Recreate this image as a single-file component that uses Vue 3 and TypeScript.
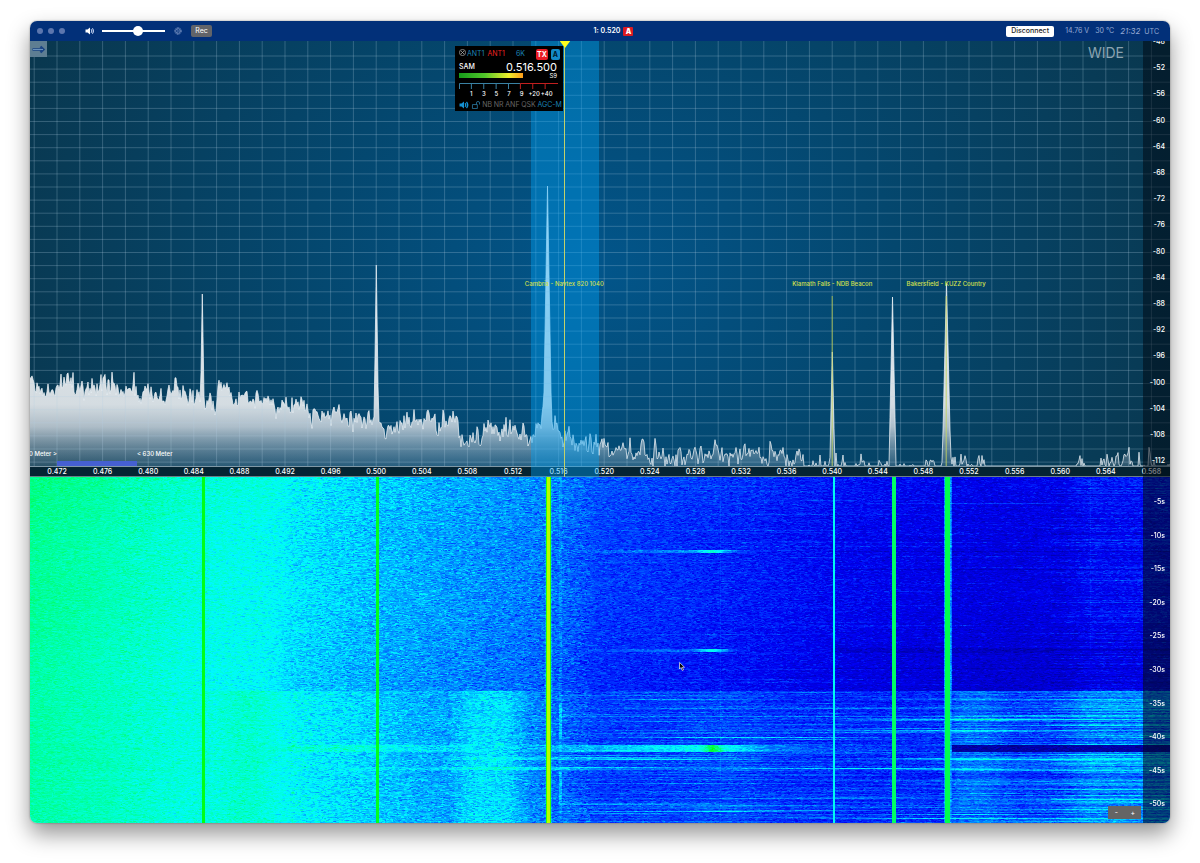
<script setup lang="ts">
import { onMounted, ref } from 'vue'

type Point = [number, number]

const START = 0.46963
const SPAN = 0.1
const W = 1140
const SPEC_H = 436
const FLOOR = 425
const FALL_H = 346

const volume = ref(58)
const waterfall = ref<HTMLCanvasElement | null>(null)

const freqPct = (f: number): number => ((f - START) / SPAN) * 100

const freqLabels = Array.from({ length: 25 }, (_, i) => {
  const f = 0.472 + i * 0.004
  return { text: f.toFixed(3), left: freqPct(f) + '%' }
})
const dbLabels = Array.from({ length: 17 }, (_, i) => ({
  text: String(-48 - i * 4),
  top: ((1 + i * 26.2) / SPEC_H) * 100 + '%',
}))
const timeLabels = Array.from({ length: 10 }, (_, i) => ({
  text: `-${(i + 1) * 5}s`,
  top: ((25 + i * 33.6) / FALL_H) * 100 + '%',
}))
const gridX = Array.from({ length: 50 }, (_, i) => 4.2 + i * 22.8)
const gridY = Array.from({ length: 32 }, (_, i) => 15 + i * 13.1)

const spots = [
  { text: 'Cambria - Navtex 820 1040', f: 0.5165, line: false },
  { text: 'Klamath Falls - NDB Beacon', f: 0.54, line: true },
  { text: 'Bakersfield - KUZZ Country', f: 0.55, line: true },
].map((s) => ({ ...s, x: (freqPct(s.f) / 100) * W, left: freqPct(s.f) + '%' }))

const meterTicks = ['1', '3', '5', '7', '9', '+20', '+40']

function prng(seed: number): () => number {
  let s = seed
  return () => {
    s = (s + 0x6d2b79f5) | 0
    let t = Math.imul(s ^ (s >>> 15), 1 | s)
    t = (t + Math.imul(t ^ (t >>> 7), 61 | t)) ^ t
    return ((t ^ (t >>> 14)) >>> 0) / 4294967296
  }
}

function interp(points: Point[], x: number): number {
  if (x <= points[0][0]) return points[0][1]
  for (let i = 1; i < points.length; i++) {
    const [x1, y1] = points[i]
    if (x <= x1) {
      const [x0, y0] = points[i - 1]
      return y0 + ((y1 - y0) * (x - x0)) / (x1 - x0)
    }
  }
  return points[points.length - 1][1]
}

/* Mean noise level across the panadapter */
const noiseFloor: Point[] = [
  [0, 343], [10, 347], [28, 345], [45, 342], [50, 352], [70, 340], [78, 347], [104, 349], [109, 362], [115, 350],
  [130, 354], [150, 351], [165, 359], [172, 356], [185, 362], [190, 348], [197, 346], [204, 365], [212, 355],
  [228, 355], [240, 363], [260, 366], [272, 362], [280, 373], [296, 374], [320, 377], [346, 377], [356, 385],
  [366, 392], [376, 386], [386, 377], [402, 375], [406, 387], [425, 382], [432, 397], [442, 397], [455, 391],
  [472, 390], [490, 397], [505, 389], [514, 380], [522, 378], [530, 392], [540, 402], [560, 403], [580, 404],
  [600, 407], [612, 405], [622, 415], [650, 416], [668, 412], [680, 412], [700, 412], [730, 413], [745, 417],
  [770, 421], [790, 424], [830, 423], [850, 430], [890, 432], [898, 425], [950, 423], [960, 439], [1035, 440],
  [1050, 430], [1075, 422], [1090, 418], [1105, 424], [1140, 425],
]
const peaks = [
  { x: 172.3, y: 253, half: 2.6 },
  { x: 346.3, y: 224, half: 2.6 },
  { x: 517.5, y: 145, half: 4.5 },
  { x: 802.3, y: 311, half: 2.2 },
  { x: 862.5, y: 256, half: 3.2 },
  { x: 916.5, y: 242, half: 4 },
]

function buildTrace(): string {
  const rnd = prng(4711)
  const pts: Point[] = []
  let prev = 0
  for (let x = 0; x <= W; x += 1) {
    const raw = rnd() - 0.5 + (rnd() - 0.5)
    prev = prev * 0.4 + raw * 13
    const spike = rnd() < 0.08 ? rnd() * 12 : 0
    pts.push([x, Math.min(FLOOR, interp(noiseFloor, x) + prev - spike)])
  }
  for (const p of peaks) {
    for (const pt of pts) {
      const t = Math.abs(pt[0] - p.x) / p.half
      if (t < 1) pt[1] = Math.min(pt[1], p.y + (FLOOR - 15 - p.y) * t)
    }
    pts.push([p.x, p.y])
  }
  pts.sort((a, b) => a[0] - b[0])
  return pts.map(([x, y]) => `${x},${y.toFixed(1)}`).join(' L')
}
const trace = buildTrace()
const tracePath = `M${trace}`
const areaPath = `M0,${FLOOR} L${trace} L${W},${FLOOR} Z`

const palette: [number, number, number, number][] = [
  [0, 0, 0, 90],
  [0.24, 0, 0, 240],
  [0.3, 0, 50, 255],
  [0.5, 0, 250, 255],
  [0.57, 0, 255, 200],
  [0.75, 0, 255, 0],
  [1, 255, 255, 0],
]
function colour(v: number): [number, number, number] {
  const c = Math.max(0, Math.min(1, v))
  for (let i = 1; i < palette.length; i++) {
    if (c <= palette[i][0]) {
      const a = palette[i - 1]
      const b = palette[i]
      const t = (c - a[0]) / (b[0] - a[0])
      return [a[1] + (b[1] - a[1]) * t, a[2] + (b[2] - a[2]) * t, a[3] + (b[3] - a[3]) * t]
    }
  }
  return [255, 255, 0]
}

const earlyLevel: Point[] = [
  [0, 0.615], [70, 0.59], [130, 0.56], [172, 0.535], [230, 0.52], [270, 0.485], [346, 0.44], [420, 0.41],
  [490, 0.38], [530, 0.36], [570, 0.31], [650, 0.29], [730, 0.27], [820, 0.24], [920, 0.22],
  [970, 0.21], [1030, 0.215], [1060, 0.25], [1140, 0.25],
]
const lateLevel: Point[] = [
  [0, 0.6], [70, 0.58], [150, 0.54], [185, 0.54], [205, 0.56], [225, 0.558], [250, 0.52], [290, 0.49],
  [346, 0.46], [400, 0.42], [418, 0.42], [445, 0.475], [475, 0.475], [500, 0.39], [530, 0.355], [570, 0.305],
  [640, 0.3], [700, 0.31], [760, 0.285], [860, 0.275], [914, 0.28], [930, 0.345], [955, 0.34], [985, 0.3],
  [1025, 0.31], [1060, 0.38], [1140, 0.38],
]
const streaks = [
  { y: 74, from: 530, peak: 682, to: 725, amp: 0.12, r: 1 },
  { y: 173, from: 530, peak: 682, to: 720, amp: 0.1, r: 1 },
  { y: 260, from: 560, peak: 800, to: 910, amp: 0.09, r: 0 },
  { y: 281, from: 380, peak: 590, to: 760, amp: 0.12, r: 1 },
  { y: 291, from: 300, peak: 500, to: 790, amp: 0.09, r: 1 },
]
const bandBoost: Point[] = [
  [230, 0], [280, 0.06], [320, 0.07], [346, 0.06], [420, 0.05], [450, 0], [490, 0.01], [520, 0.06], [580, 0.14],
  [660, 0.2], [700, 0.19], [740, 0.08], [800, 0.03], [900, 0],
]
const carriers = [
  { x: 172.8, half: 1.5, v: 0.73, halo: 0 },
  { x: 347, half: 1.4, v: 0.72, halo: 0 },
  { x: 518, half: 2.2, v: 0.93, halo: 5 },
  { x: 803.5, half: 1, v: 0.52, halo: 0 },
  { x: 863.5, half: 1.6, v: 0.66, halo: 0 },
  { x: 917.2, half: 2.3, v: 0.68, halo: 4 },
]

/* Short bursts that smear along single rows of the lower part */
function makeBursts(rnd: () => number): Float32Array {
  const field = new Float32Array(W * FALL_H)
  for (let i = 0; i < 330; i++) {
    const y = i < 260 ? 214 + Math.floor(rnd() * (FALL_H - 214)) : Math.floor(rnd() * 214)
    const mid = (i < 260 ? 560 : 640) + rnd() * 560
    const len = 40 + rnd() * 170
    const amp = 0.02 + rnd() * (i < 260 ? 0.065 : 0.03)
    const from = Math.max(530, Math.floor(mid - len))
    const to = Math.min(W, Math.floor(mid + len))
    for (let x = from; x < to; x++) {
      field[y * W + x] += amp * (1 - Math.abs(x - mid) / len)
    }
  }
  return field
}

function drawWaterfall(canvas: HTMLCanvasElement): void {
  const ctx = canvas.getContext('2d')
  if (!ctx) return
  const img = ctx.createImageData(W, FALL_H)
  const rnd = prng(90210)
  const bursts = makeBursts(rnd)
  for (let y = 0; y < FALL_H; y++) {
    const late = y > 213
    const rowNoise = rnd() + rnd() - 1
    const rowNoise2 = rnd() + rnd() - 1
    const notch = y >= 268 && y <= 274
    const dip = Math.max(0, Math.min(1, (y - 120) / 80))
    let cell = 0
    let target = 0
    let run = 0
    for (let x = 0; x < W; x++) {
      if (run <= 0) {
        target = (rnd() + rnd() + rnd() - 1.5) * 1.1
        run = rnd() < 0.4 ? 1 : rnd() < 0.6 ? 2 : 3
      }
      run--
      cell = cell * 0.2 + target * 0.8
      let v = interp(late ? lateLevel : earlyLevel, x)
      if (!late) {
        v += y < 60 ? 0.02 * (1 - y / 60) : 0
        v -= dip * (x > 250 ? 0.024 : 0.014)
        if (x > 1020) v += rowNoise2 * 0.045
        if (x > 800 && ((y >= 171 && y <= 175) || y === 74 || y === 92 || y === 191)) v -= 0.04
      } else {
        v += rowNoise * (x > 1020 ? 0.08 : x > 900 ? 0.045 : x > 500 ? 0.018 : 0.008)
        if (x > 1020) v += rowNoise2 * 0.04
      }
      v += bursts[y * W + x]
      if (notch) v = x > 918 ? 0.12 : v + interp(bandBoost, x)
      for (const s of streaks) {
        if (Math.abs(y - s.y) <= s.r && x > s.from && x < s.to) {
          v += s.amp * (x < s.peak ? (x - s.from) / (s.peak - s.from) : (s.to - x) / (s.to - s.peak))
        }
      }
      const hot = Math.abs(x - 682)
      if (hot < 20 && ((y >= 73 && y <= 75) || (y >= 172 && y <= 174))) v += 0.16 * (1 - hot / 20)
      if (hot < 14 && notch) v += 0.2 * (1 - hot / 14)
      if (Math.abs(x - 530) < 2) {
        v += (y > 226 && y < 262) || (y > 294 && y < 324) ? 0.09 : 0.03
      }
      if (x === 690 || (x === 1060 && y < 180)) v += 0.02
      v += cell * (x < 90 ? 0.035 : x < 260 ? 0.05 : x < 560 ? 0.068 : 0.05)
      for (const c of carriers) {
        const d = Math.abs(x - c.x)
        if (d < c.half) v = c.v > 0.9 && d > 1 ? 0.8 : c.v
        else if (c.halo && d < c.halo) v = Math.max(v, 0.44 + cell * 0.06 - (d - c.half) * 0.045)
      }
      const [r, g, b] = colour(v)
      const i = (y * W + x) * 4
      img.data[i] = r
      img.data[i + 1] = g
      img.data[i + 2] = b
      img.data[i + 3] = 255
    }
  }
  ctx.putImageData(img, 0, 0)
}

onMounted(() => {
  if (waterfall.value) drawWaterfall(waterfall.value)
})
</script>

<template>
  <main class="window">
    <header class="titlebar">
      <div class="bar-left">
        <div class="dots"><i></i><i></i><i></i></div>
        <svg class="speaker" viewBox="0 0 20 16" aria-hidden="true">
          <path d="M1 5h4l5-4v14l-5-4H1z" fill="#fff" />
          <path d="M12 4.500q3 3.500 0 7M14.500 2.500q5 5.500 0 11" fill="none" stroke="#b9c9ea" stroke-width="2.200" />
        </svg>
        <input v-model="volume" class="slider" type="range" min="0" max="100" aria-label="Volume" />
        <button class="gear" aria-label="Settings">
          <svg viewBox="0 0 16 16">
            <circle cx="8" cy="8" r="6.500" fill="none" stroke="#8fa5d0" stroke-width="1.800" stroke-dasharray="2 1.400" />
            <circle cx="8" cy="8" r="4.700" fill="none" stroke="#8fa5d0" stroke-width="1.400" />
            <path d="M8 8h4.500M8 8l-2.300-4M8 8l-2.300 4" stroke="#8fa5d0" stroke-width="1" />
          </svg>
        </button>
        <button class="rec">Rec</button>
      </div>
      <div class="bar-mid"><span>1: 0.520</span><b>A</b></div>
      <div class="bar-right">
        <button class="disconnect">Disconnect</button>
        <span>14.76 V</span>
        <span>30 °C</span>
        <span class="clock"><em>21:32</em> UTC</span>
      </div>
    </header>

    <section class="spectrum" aria-label="Panadapter">
      <svg class="plot" :viewBox="`0 0 ${W} ${SPEC_H}`" preserveAspectRatio="none" aria-hidden="true">
        <defs>
          <linearGradient id="area" gradientUnits="userSpaceOnUse" x1="0" y1="145" x2="0" y2="425">
            <stop offset="0" stop-color="#fff" stop-opacity="0.950" />
            <stop offset="0.780" stop-color="#e6eaed" stop-opacity="0.920" />
            <stop offset="0.860" stop-color="#dce1e7" stop-opacity="0.780" />
            <stop offset="1" stop-color="#a9bac8" stop-opacity="0.220" />
          </linearGradient>
        </defs>
        <path :d="areaPath" fill="url(#area)" />
        <path class="trace" :d="tracePath" />
        <g class="grid">
          <line v-for="x in gridX" :key="'x' + x" :x1="x" :x2="x" y1="0" y2="425" />
          <line v-for="y in gridY" :key="'y' + y" x1="0" :x2="W" :y1="y" :y2="y" />
        </g>
        <rect x="27" y="420" width="80" height="5" fill="#4560d2" />
        <template v-for="s in spots" :key="s.text">
          <line v-if="s.line" class="spot-line" :x1="s.x" :x2="s.x" y1="255" y2="425" />
        </template>
      </svg>
      <span class="band band-before">630 Meter &gt;</span>
      <span class="band band-after">&lt; 630 Meter</span>
      <div class="freq-axis">
        <span v-for="l in freqLabels" :key="l.text" :style="{ left: l.left }">{{ l.text }}</span>
      </div>
      <div class="passband"></div>
      <span v-for="s in spots" :key="s.text" class="spot" :style="{ left: s.left }">{{ s.text }}</span>
      <div class="slice-line"></div>
      <svg class="marker" viewBox="0 0 12 8" aria-hidden="true"><path d="M0 0h12L6 8z" fill="#ffff1e" /></svg>
      <div class="wide">WIDE</div>
      <button class="collapse" aria-label="Show side panel">
        <svg viewBox="0 0 15 15"><path d="M1.500 7.500H12M9.500 4.500l3 3-3 3" fill="none" stroke="#1b4585" stroke-width="2.400" /><path d="M2 7.500h10" stroke="#7ea6cc" stroke-width=".8" /></svg>
      </button>
      <div class="scale">
        <span v-for="l in dbLabels" :key="l.text" :style="{ top: l.top }">{{ l.text }}</span>
      </div>

      <div class="flag">
        <div class="flag-top">
          <button class="close" aria-label="Close slice">
            <svg viewBox="0 0 16 16"><circle cx="8" cy="8" r="7" /><path d="M4.500 4.500l7 7M11.500 4.500l-7 7" /></svg>
          </button>
          <button class="ant">ANT1</button>
          <button class="ant tx-ant">ANT1</button>
          <button class="ant width">6K</button>
          <button class="badge tx">TX</button>
          <button class="badge slice">A</button>
        </div>
        <div class="flag-freq"><span>SAM</span><strong>0.516.500</strong></div>
        <div class="flag-meter"><div class="level"></div><span>S9</span></div>
        <svg class="meter-scale" viewBox="0 0 100 8" preserveAspectRatio="none" aria-hidden="true">
          <path d="M.5 7V1.500H62M12.500 1.500V7M25 1.500V7M37.500 1.500V7M50 1.500V7" stroke="#3a82a4" />
          <path d="M62 7V1.500H100M74.500 1.500V7M87 1.500V7" stroke="#c41f1f" />
        </svg>
        <div class="meter-labels"><span v-for="t in meterTicks" :key="t">{{ t }}</span></div>
        <div class="flag-bottom">
          <button class="icon" aria-label="Mute">
            <svg viewBox="0 0 20 16">
              <path d="M1 5h4l5-4v14l-5-4H1z" fill="#1490d2" />
              <path d="M12 4.500q3 3.500 0 7M15 2q5 6 0 12" fill="none" stroke="#1490d2" stroke-width="2.600" />
            </svg>
          </button>
          <button class="icon" aria-label="Lock">
            <svg viewBox="0 0 20 18"><path d="M2 8h11v9H2zM11 8V4.500a3.500 3.500 0 0 1 7 0V8" fill="none" stroke="#2b7eaa" stroke-width="1.800" /></svg>
          </button>
          <button>NB</button><button>NR</button><button>ANF</button><button>QSK</button>
          <button class="on">AGC-M</button>
        </div>
      </div>
    </section>

    <section class="fall" aria-label="Waterfall">
      <canvas ref="waterfall" :width="W" :height="FALL_H"></canvas>
      <div class="scale fall-scale">
        <span v-for="l in timeLabels" :key="l.text" :style="{ top: l.top }">{{ l.text }}</span>
      </div>
      <div class="zoom"><button aria-label="Zoom out">-</button><button aria-label="Zoom in">+</button></div>
      <svg class="cursor" viewBox="0 0 12 18" aria-hidden="true">
        <path d="M1 1v13l3-3 2.500 6 2.500-1-2.500-5.500H11z" fill="#000" stroke="#fff" stroke-width="1.300" />
      </svg>
    </section>
  </main>
</template>

<style>
body {
  margin: 0;
  background: #fff;
}
</style>

<style scoped>
.window {
  display: flex;
  flex-direction: column;
  box-sizing: border-box;
  height: calc(100vh - 61px);
  min-height: 500px;
  margin: 21px 30px 40px;
  border-radius: 7px;
  overflow: hidden;
  box-shadow: 0 0 2px rgba(0, 0, 0, 0.4), 0 11px 22px rgba(0, 0, 0, 0.42);
  font-family: Inter, 'Liberation Sans', sans-serif;
  font-size: 7px;
  line-height: 10px;
  color: #fff;
}
button {
  margin: 0;
  padding: 0;
  border: 0;
  background: none;
  color: inherit;
  font: inherit;
}
svg {
  display: block;
}
.titlebar {
  display: grid;
  grid-template-columns: 1fr auto 1fr;
  align-items: center;
  flex: 0 0 20px;
  background: #023079;
}
.bar-left,
.bar-right,
.bar-mid,
.dots {
  display: flex;
  align-items: center;
}
.bar-left {
  padding-left: 7px;
}
.dots {
  gap: 5px;
}
.dots i {
  width: 6px;
  height: 6px;
  border-radius: 50%;
  background: #5c76ae;
}
.speaker {
  width: 10px;
  height: 8px;
  margin-left: 20px;
}
.slider {
  appearance: none;
  width: 63px;
  height: 10px;
  margin: 0 0 0 7px;
  background: linear-gradient(#fff, #fff) center / 100% 2px no-repeat;
}
.slider::-webkit-slider-thumb {
  appearance: none;
  width: 10px;
  height: 10px;
  border-radius: 50%;
  background: #fff;
}
.gear {
  margin-left: 9px;
}
.gear svg {
  width: 8px;
  height: 8px;
}
.rec {
  width: 21px;
  height: 12px;
  margin-left: 9px;
  border-radius: 2px;
  background: #626469;
}
.bar-mid {
  gap: 3px;
  padding-left: 27px;
  font-weight: 600;
}
.bar-mid b {
  width: 10px;
  height: 9px;
  line-height: 9px;
  background: #dc1a22;
  border-radius: 1px;
  text-align: center;
}
.bar-right {
  justify-content: flex-end;
  gap: 6px;
  padding-right: 11px;
  color: #94a8d2;
}
.disconnect {
  width: 48px;
  height: 11px;
  margin-right: 5px;
  border-radius: 2px;
  background: #fff;
  color: #1c1c1c;
  font-weight: 500;
}
.clock em {
  font-size: 8px;
  margin-right: 2px;
}
.spectrum,
.fall {
  position: relative;
  overflow: hidden;
  min-height: 0;
}
.spectrum {
  flex: 436 1 0;
  background: radial-gradient(ellipse 62% 125% at 50% 52%, #02558a 0%, #04476e 42%, #083b56 78%, #0a3448 100%);
}
.plot {
  width: 100%;
  height: 100%;
}
.trace {
  fill: none;
  stroke: #eef3f7;
  stroke-opacity: 0.75;
  stroke-width: 1;
  vector-effect: non-scaling-stroke;
}
.grid line {
  stroke: #b4d2e4;
  stroke-opacity: 0.26;
  stroke-width: 1;
  vector-effect: non-scaling-stroke;
}
.spot-line {
  stroke: #c4d24a;
  stroke-opacity: 0.75;
  stroke-width: 1;
  vector-effect: non-scaling-stroke;
}
.freq-axis {
  position: absolute;
  inset: auto 0 0;
  height: 9px;
  border-top: 1px solid #7f98a6;
  border-bottom: 1px solid #6b7f88;
  background: #052433;
}
.freq-axis span {
  position: absolute;
  top: 0;
  transform: translateX(-50%);
  font-weight: 500;
}
.band {
  position: absolute;
  bottom: 18px;
  font-size: 6px;
  font-weight: 500;
  white-space: nowrap;
}
.band-before {
  right: 97.632%;
}
.band-after {
  left: 9.386%;
}
.spot {
  position: absolute;
  top: 54.7%;
  transform: translateX(-50%);
  color: #d5e04e;
  font-size: 6px;
  font-weight: 500;
  white-space: nowrap;
}
.passband {
  position: absolute;
  top: 0;
  bottom: 0;
  left: 43.95%;
  width: 6%;
  background: rgba(0, 164, 251, 0.4);
}
.slice-line {
  position: absolute;
  top: 0;
  bottom: 0;
  left: 46.88%;
  width: 1px;
  background: #c2d16a;
}
.marker {
  position: absolute;
  top: 0;
  left: 46.92%;
  width: 11px;
  height: 7px;
  transform: translateX(-50%);
}
.wide {
  position: absolute;
  top: 3px;
  right: 46px;
  color: #8ba3b1;
  font-size: 14px;
  line-height: 17px;
}
.collapse {
  position: absolute;
  top: 0;
  left: 0;
  width: 17px;
  height: 16px;
  background: #5e7e92;
}
.collapse svg {
  width: 15px;
  height: 15px;
  margin: 0 auto;
}
.scale {
  position: absolute;
  top: 0;
  right: 0;
  bottom: 0;
  width: 27px;
  background: rgba(0, 8, 18, 0.52);
}
.scale span {
  position: absolute;
  right: 5px;
  transform: translateY(-50%);
  font-weight: 500;
}
.flag {
  position: absolute;
  top: 5px;
  right: 53.25%;
  box-sizing: border-box;
  width: 108px;
  padding: 2px 0 0 4px;
  background: #000;
}
.flag-top {
  display: flex;
  align-items: center;
  height: 12px;
  color: #1b82b4;
}
.close svg {
  width: 7px;
  height: 7px;
  fill: none;
  stroke: #b4b4b4;
  stroke-width: 1.6;
  margin-bottom: 4px;
}
.ant {
  margin-left: 1px;
}
.tx-ant {
  margin-left: 3px;
  color: #ee2322;
}
.width {
  margin: 0 auto;
}
.badge {
  height: 11px;
  line-height: 11px;
  border-radius: 2px;
  font-weight: 700;
}
.tx {
  width: 12px;
  background: #ea1c25;
  color: #fff;
}
.slice {
  width: 9px;
  margin: 0 3px;
  background: #138ac8;
  color: #001a2c;
}
.flag-freq {
  display: flex;
  justify-content: space-between;
  align-items: center;
  height: 13px;
  padding-right: 6px;
}
.flag-freq span {
  font-weight: 500;
}
.flag-freq strong {
  font-size: 11px;
  font-weight: 400;
}
.flag-meter {
  display: flex;
  justify-content: space-between;
  height: 9px;
  padding-right: 6px;
  font-size: 6px;
  line-height: 5px;
}
.level {
  width: 64px;
  height: 5px;
  background: linear-gradient(90deg, #159c1b, #51c62a 40%, #f0ee2c 78%, #ff9d1b);
}
.meter-scale {
  width: 99px;
  height: 8px;
  fill: none;
}
.meter-labels {
  display: grid;
  grid-template-columns: repeat(7, 1fr);
  width: 88px;
  margin-left: 6px;
  font-size: 6px;
  line-height: 8px;
  font-weight: 500;
  text-align: center;
}
.flag-bottom {
  display: flex;
  align-items: center;
  justify-content: space-between;
  height: 13px;
  padding-right: 1px;
  color: #666;
}
.flag-bottom .on {
  color: #1b82b4;
}
.icon svg {
  width: 10px;
  height: 8px;
}
.fall {
  flex: 346 1 0;
}
.fall canvas {
  display: block;
  width: 100%;
  height: 100%;
}
.fall-scale {
  background: rgba(0, 10, 26, 0.58);
}
.zoom {
  position: absolute;
  right: 29px;
  bottom: 4px;
  display: grid;
  grid-template-columns: 1fr 1fr;
  width: 33px;
  height: 13px;
  background: #656565;
}
.cursor {
  position: absolute;
  left: 56.9%;
  top: 53.5%;
  width: 6px;
  height: 9px;
}
</style>
